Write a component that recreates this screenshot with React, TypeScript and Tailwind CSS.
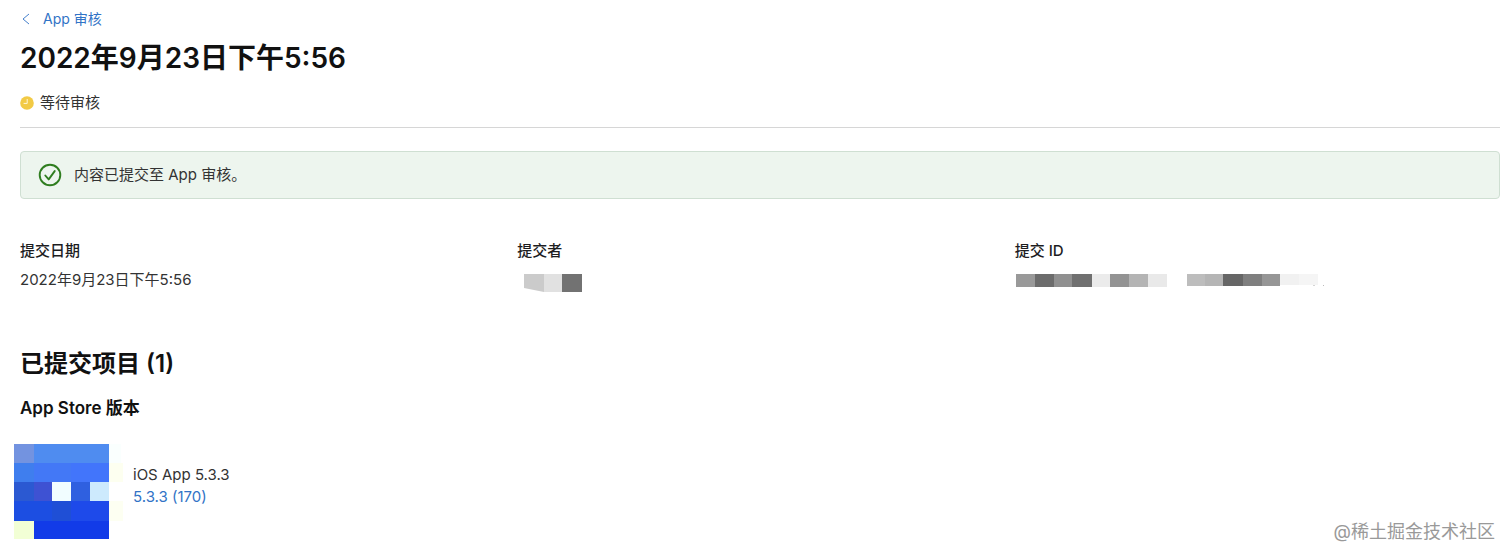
import React from 'react';

interface Cell {
  x: number;
  y: number;
  w: number;
  h: number;
  fill: string;
}

const APP_ICON_CELLS: Cell[] = [
  { x: 0, y: 0, w: 20, h: 19, fill: '#7393e0' },
  { x: 20, y: 0, w: 75, h: 19, fill: '#4f8cf0' },
  { x: 0, y: 19, w: 20, h: 19, fill: '#3f7eee' },
  { x: 20, y: 19, w: 37, h: 19, fill: '#4378f6' },
  { x: 57, y: 19, w: 38, h: 19, fill: '#4275fb' },
  { x: 0, y: 38, w: 20, h: 19, fill: '#2b59d2' },
  { x: 20, y: 38, w: 18, h: 19, fill: '#3e52d3' },
  { x: 38, y: 38, w: 19, h: 19, fill: '#f1fdff' },
  { x: 57, y: 38, w: 19, h: 19, fill: '#2f60e0' },
  { x: 76, y: 38, w: 19, h: 19, fill: '#cdeafd' },
  { x: 0, y: 57, w: 38, h: 20, fill: '#1c4ee2' },
  { x: 38, y: 57, w: 19, h: 20, fill: '#1f4fd6' },
  { x: 57, y: 57, w: 38, h: 20, fill: '#1e4aea' },
  { x: 0, y: 77, w: 20, h: 18, fill: '#f2ffd5' },
  { x: 20, y: 77, w: 75, h: 18, fill: '#123be8' },
  { x: 95, y: 0, w: 12, h: 19, fill: '#fafffe' },
  { x: 95, y: 19, w: 14, h: 19, fill: '#fdfff0' },
  { x: 95, y: 57, w: 14, h: 20, fill: '#fdfff2' },
];

const ID_CELLS: Cell[] = [
  { x: 1, y: 0, w: 19, h: 13, fill: '#999999' },
  { x: 20, y: 0, w: 19, h: 13, fill: '#6c6c6c' },
  { x: 39, y: 0, w: 18, h: 13, fill: '#909090' },
  { x: 57, y: 0, w: 20, h: 13, fill: '#707070' },
  { x: 77, y: 0, w: 18, h: 13, fill: '#ebebeb' },
  { x: 95, y: 0, w: 19, h: 13, fill: '#939393' },
  { x: 114, y: 0, w: 19, h: 13, fill: '#b4b4b4' },
  { x: 133, y: 0, w: 19, h: 13, fill: '#e9e9e9' },
  { x: 172, y: 0, w: 18, h: 12, fill: '#bdbdbd' },
  { x: 190, y: 0, w: 18, h: 12, fill: '#b5b5b5' },
  { x: 208, y: 0, w: 20, h: 12, fill: '#666666' },
  { x: 228, y: 0, w: 19, h: 12, fill: '#7f7f7f' },
  { x: 247, y: 0, w: 18, h: 12, fill: '#969696' },
  { x: 265, y: 0, w: 19, h: 11, fill: '#f1f1f1' },
  { x: 284, y: 0, w: 19, h: 11, fill: '#f5f5f5' },
  { x: 298, y: 11, w: 2, h: 1, fill: '#d5d5d5' },
  { x: 308, y: 11, w: 1, h: 1, fill: '#bbbbbb' },
];

const Cells: React.FC<{ cells: Cell[] }> = ({ cells }) => (
  <>
    {cells.map((c) => (
      <rect key={`${c.x}-${c.y}`} x={c.x} y={c.y} width={c.w} height={c.h} fill={c.fill} />
    ))}
  </>
);

const ClockIcon: React.FC = () => (
  <svg width="14" height="14" viewBox="0 0 14 14" className="shrink-0" aria-hidden="true">
    <circle cx="7" cy="7" r="6.8" fill="#f2ca45" />
    <path d="M7.2 3v4.4H3.6" fill="none" stroke="#fff6d8" strokeWidth="1" />
  </svg>
);

const CheckIcon: React.FC = () => (
  <svg width="24" height="24" viewBox="0 0 24 24" fill="none" stroke="#2f7d1f" className="shrink-0" aria-hidden="true">
    <circle cx="12" cy="12" r="10.3" strokeWidth="1.9" />
    <path d="M7.3 12.5l3.4 3.9 6-8.3" strokeWidth="1.9" strokeLinecap="round" strokeLinejoin="round" />
  </svg>
);

const Field: React.FC<{ label: string; children: React.ReactNode }> = ({ label, children }) => (
  <div>
    <dt className="font-medium text-[#1d1d1f]">{label}</dt>
    <dd className="mt-[9px]">{children}</dd>
  </div>
);

const App: React.FC = () => {
  return (
    <div className="bg-white pl-5 pr-3 pt-[7px] pb-5 font-['Inter','Noto_Sans_CJK_SC',sans-serif] text-[15px] leading-5 text-[#333333]">
      <header className="border-b border-[#d6d6d6] pb-[14px]">
        <a href="#" className="flex w-fit items-center gap-3 text-sm leading-6 text-[#3173c6]">
          <svg width="11" height="12" viewBox="0 0 11 12" fill="none" stroke="currentColor" aria-hidden="true">
            <path d="M9 1L3 6l6 5" strokeWidth="0.9" />
          </svg>
          App 审核
        </a>
        <h1 className="mt-[9px] text-[28px] leading-9 font-semibold text-[#111111]">2022年9月23日下午5:56</h1>
        <div className="mt-[17px] flex items-center gap-[6px]">
          <ClockIcon />
          <span>等待审核</span>
        </div>
      </header>

      <main>
        <div className="mt-[23px] flex items-center gap-3 rounded border border-[#cfdfd2] bg-[#edf5ee] px-[17px] py-[11px]" role="status">
          <CheckIcon />
          <p>内容已提交至 App 审核。</p>
        </div>

        <dl className="mt-[42px] grid grid-cols-3 gap-3">
          <Field label="提交日期">2022年9月23日下午5:56</Field>
          <Field label="提交者">
            <svg width="66" height="24" viewBox="0 0 66 24" className="block" aria-hidden="true">
              <path d="M7 4h20v18L7 18z" fill="#cbcbcb" />
              <path d="M27 4h18v18H27z" fill="#e1e1e1" />
              <path d="M45 4h20v18H45z" fill="#727272" />
            </svg>
          </Field>
          <Field label="提交 ID">
            <svg width="310" height="24" viewBox="0 -4 310 24" className="block" aria-hidden="true">
              <Cells cells={ID_CELLS} />
            </svg>
          </Field>
        </dl>

        <section className="mt-[54px]">
          <h2 className="text-2xl leading-8 font-semibold text-[#111111]">已提交项目 (1)</h2>
          <h3 className="mt-4 text-[17px] leading-6 font-semibold text-[#111111]">App Store 版本</h3>
          <div className="-ml-[6px] mt-6 flex items-start gap-[9px]">
            <svg width="110" height="95" viewBox="0 0 110 95" shapeRendering="crispEdges" role="img" aria-label="iOS App">
              <Cells cells={APP_ICON_CELLS} />
            </svg>
            <div className="pt-5 leading-[22px]">
              <p>iOS App 5.3.3</p>
              <a href="#" className="text-[#3173c6]">5.3.3 (170)</a>
            </div>
          </div>
        </section>
      </main>

      <div className="absolute right-[17px] bottom-[15px] text-lg leading-6 text-[#999999] [text-shadow:1px_1px_1px_#ffffff]">
        @稀土掘金技术社区
      </div>
    </div>
  );
};

export default App;
